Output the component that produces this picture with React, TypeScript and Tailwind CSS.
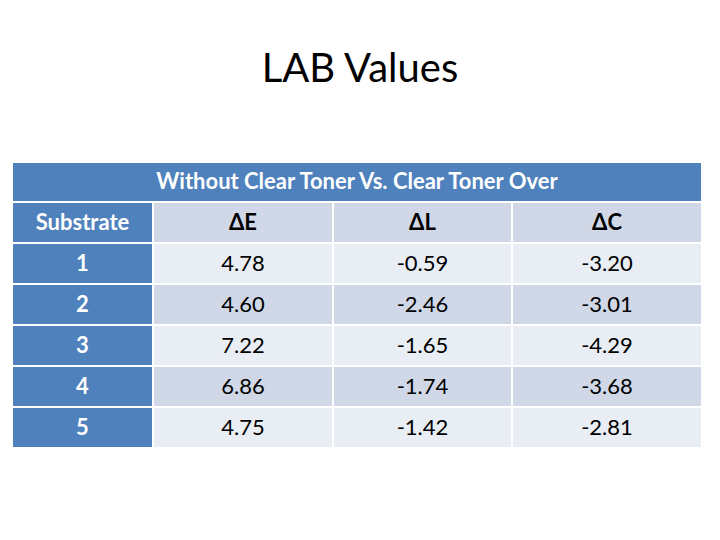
const rows = [
  ['1', '4.78', '-0.59', '-3.20'],
  ['2', '4.60', '-2.46', '-3.01'],
  ['3', '7.22', '-1.65', '-4.29'],
  ['4', '6.86', '-1.74', '-3.68'],
  ['5', '4.75', '-1.42', '-2.81'],
];

export default function App() {
  return (
    <div
      className="w-[720px] h-[540px] bg-white flex flex-col items-center"
      style={{ fontFamily: 'Lato, "Open Sans", sans-serif' }}
    >
      <h1 className="mt-[43px] text-[40px] leading-[48px] text-black">LAB Values</h1>

      <div className="mt-[72px] self-start ml-[13px] grid grid-cols-[139px_178px_177px_188px] grid-rows-[38px_repeat(6,39px)] gap-[2px]">
        {/* Title row */}
        <div className="col-span-4 bg-[#4f81bd] flex items-center justify-center pb-[3px] text-white font-bold text-[22px]">
          Without Clear Toner Vs. Clear Toner Over
        </div>

        {/* Column heads */}
        <div className="bg-[#4f81bd] flex items-center justify-center pb-[2px] text-white font-bold text-[22px]">
          Substrate
        </div>
        {['ΔE', 'ΔL', 'ΔC'].map((h) => (
          <div key={h} className="bg-[#d0d8e8] flex items-center justify-center pb-[2px] text-black font-bold text-[22px]">
            {h}
          </div>
        ))}

        {rows.map((r, i) => (
          <>
            <div key={`s${i}`} className="bg-[#4f81bd] flex items-center justify-center pb-[2px] text-white font-bold text-[22px]">
              {r[0]}
            </div>
            {r.slice(1).map((v, j) => (
              <div
                key={`${i}-${j}`}
                className={`${i % 2 === 0 ? 'bg-[#e9edf4]' : 'bg-[#d0d8e8]'} flex items-center justify-center pb-[2px] text-black text-[22px]`}
              >
                {v}
              </div>
            ))}
          </>
        ))}
      </div>
    </div>
  );
}
